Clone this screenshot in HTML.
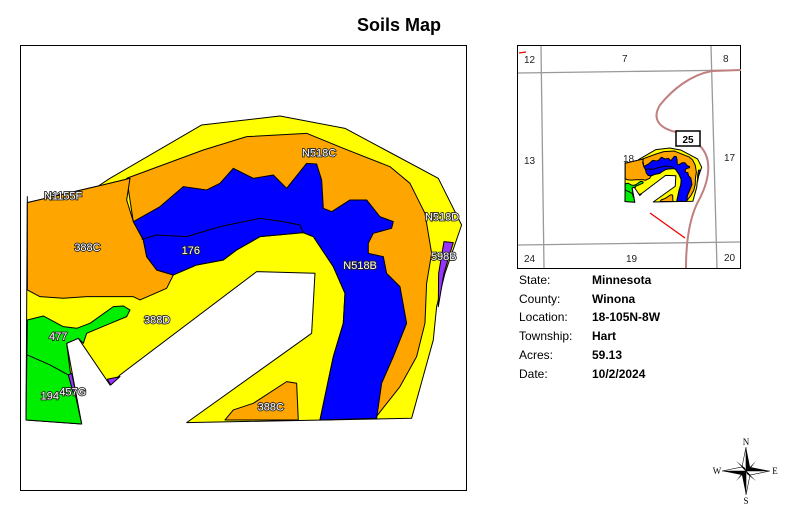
<!DOCTYPE html>
<html><head><meta charset="utf-8"><style>
body{margin:0;width:790px;height:505px;background:#fff;position:relative;overflow:hidden;font-family:"Liberation Sans",sans-serif}
.t{position:absolute;font-size:12px;color:#000}
.lbl{font-family:"Liberation Sans",sans-serif;font-size:33px;fill:#fff;stroke:#222;stroke-width:5;paint-order:stroke}
#m *{vector-effect:non-scaling-stroke}
</style></head><body>
<div class="t" style="left:0;width:798px;text-align:center;top:15px;font-size:18px;font-weight:bold">Soils Map</div>
<svg width="790" height="505" style="position:absolute;left:0;top:0">
<defs>
<g id="m" stroke="#000" stroke-width="1" stroke-linejoin="round">
<polygon fill="#ffff00" points="22,470 22,488 235,438 270,415 545,255 780,228 975,265 1255,415 1325,555 1275,700 1250,800 1240,900 1175,1135 500,1148 875,880 885,700 710,695 300,1005 270,1035 175,895 140,910 185,1152 18,1140"/>
<polygon fill="#ffa500" points="320,415 550,330 680,290 860,280 970,325 1110,380 1170,430 1215,520 1235,640 1220,730 1215,850 1190,950 1140,1040 1065,1135 900,1140 940,950 970,850 975,760 940,680 880,590 850,578 720,590 650,630 610,660 530,675 460,705 410,690 380,650 370,600 340,545"/>
<polygon fill="#ffa500" points="22,488 235,438 330,415 320,480 340,545 370,600 380,650 410,690 460,705 440,745 360,780 340,770 260,770 200,770 130,775 60,770 22,750"/>
<polygon fill="#0000ff" points="340,545 420,500 490,440 560,450 600,430 640,385 700,415 760,405 800,445 860,370 890,372 905,420 910,505 935,515 990,480 1040,480 1080,530 1120,545 1115,565 1060,580 1045,610 1045,640 1090,650 1100,700 1140,740 1160,850 1120,950 1085,1030 1070,1135 900,1140 940,950 970,850 975,760 940,680 880,590 850,578 720,590 650,630 610,660 530,675 460,705 410,690 380,650 370,600"/>
<polyline fill="none" points="365,598 410,585 500,590 600,560 720,535 790,545 840,555 850,578"/>
<polygon fill="#ffa500" points="615,1140 640,1110 700,1090 800,1025 830,1030 835,1140"/>
<polygon fill="#00ee00" points="22,840 70,828 130,860 170,865 210,850 280,800 310,798 330,810 320,830 260,855 200,880 190,910 175,895 140,910 150,990 185,1152 18,1140"/>
<polyline fill="none" points="22,945 90,975 145,1005"/>
<polygon fill="#9933ff" points="145,1005 155,1000 168,1060 160,1060"/>
<polygon fill="#9933ff" points="262,1018 300,1010 272,1035"/>
<polygon fill="#9933ff" points="1272,605 1300,608 1272,700 1255,800 1256,700"/>
</g>
</defs>
<rect x="20.5" y="45.5" width="446" height="445" fill="none" stroke="#000" stroke-width="1"/>
<g transform="translate(20,40) scale(0.3333)">
<use href="#m"/>
<text class="lbl" x="72" y="478">N1155F</text>
<text class="lbl" x="163" y="633">388C</text>
<text class="lbl" x="485" y="642">176</text>
<text class="lbl" x="846" y="349">N518C</text>
<text class="lbl" x="1215" y="541">N518D</text>
<text class="lbl" x="1233" y="660">598B</text>
<text class="lbl" x="970" y="687">N518B</text>
<text class="lbl" x="372" y="850">388D</text>
<text class="lbl" x="87" y="900">477</text>
<text class="lbl" x="62" y="1078">194</text>
<text class="lbl" x="118" y="1066">457G</text>
<text class="lbl" x="713" y="1112">388C</text>
</g>
<!-- inset -->
<rect x="517.5" y="45.5" width="223" height="223" fill="none" stroke="#000" stroke-width="1"/>
<g stroke="#999" stroke-width="1.3" fill="none">
<line x1="541" y1="46" x2="544" y2="268"/>
<line x1="711" y1="46" x2="717" y2="268"/>
<line x1="518" y1="73" x2="740" y2="70"/>
<line x1="518" y1="245" x2="740" y2="242"/>
</g>
<path d="M741,70 L712,71 C690,75 672,90 660,105 C652,118 658,128 676,132 M700,146 C712,158 710,178 700,198 C690,215 686,240 686,268" fill="none" stroke="#c08080" stroke-width="2"/>
<path d="M650,213 L685,238" stroke="#e00" stroke-width="1.3" fill="none"/>
<path d="M519,53 L526,52" stroke="#e00" stroke-width="1.3"/>
<g transform="translate(623.9,134.6) scale(0.0587)"><use href="#m"/></g>
<rect x="676" y="131" width="24" height="15" fill="#fff" stroke="#000" stroke-width="1.5"/>
<text x="688" y="143" font-size="10" font-weight="bold" text-anchor="middle" font-family="Liberation Sans">25</text>
<g font-size="10" font-family="Liberation Sans" fill="#222">
<text x="524" y="63">12</text><text x="622" y="62">7</text><text x="723" y="62">8</text>
<text x="524" y="164">13</text><text x="724" y="161">17</text><text x="623" y="162">18</text>
<text x="524" y="262">24</text><text x="626" y="262">19</text><text x="724" y="261">20</text>
</g>
<!-- compass -->
<g transform="translate(746,471)">
<polygon points="0,-24 4,-4 0,0" fill="#000"/><polygon points="0,-24 -4,-4 0,0" fill="#fff" stroke="#000" stroke-width=".6"/>
<polygon points="0,24 -4,4 0,0" fill="#000"/><polygon points="0,24 4,4 0,0" fill="#fff" stroke="#000" stroke-width=".6"/>
<polygon points="-24,0 -4,4 0,0" fill="#000"/><polygon points="-24,0 -4,-4 0,0" fill="#fff" stroke="#000" stroke-width=".6"/>
<polygon points="24,0 4,-4 0,0" fill="#000"/><polygon points="24,0 4,4 0,0" fill="#fff" stroke="#000" stroke-width=".6"/>
<polygon points="-10,-10 -1,-3 0,0" fill="#000"/><polygon points="10,-10 3,-1 0,0" fill="#000"/>
<polygon points="10,10 1,3 0,0" fill="#000"/><polygon points="-10,10 -3,1 0,0" fill="#000"/>
<g font-family="Liberation Serif" font-size="9" text-anchor="middle">
<text x="0" y="-26">N</text><text x="0" y="33">S</text><text x="-29" y="3">W</text><text x="29" y="3">E</text></g>
</g>
</svg>
<div class="t" style="left:519px;top:273px">State:</div><div class="t" style="left:592px;top:273px;font-weight:bold">Minnesota</div>
<div class="t" style="left:519px;top:292px">County:</div><div class="t" style="left:592px;top:292px;font-weight:bold">Winona</div>
<div class="t" style="left:519px;top:310px">Location:</div><div class="t" style="left:592px;top:310px;font-weight:bold">18-105N-8W</div>
<div class="t" style="left:519px;top:329px">Township:</div><div class="t" style="left:592px;top:329px;font-weight:bold">Hart</div>
<div class="t" style="left:519px;top:348px">Acres:</div><div class="t" style="left:592px;top:348px;font-weight:bold">59.13</div>
<div class="t" style="left:519px;top:367px">Date:</div><div class="t" style="left:592px;top:367px;font-weight:bold">10/2/2024</div>
</body></html>
